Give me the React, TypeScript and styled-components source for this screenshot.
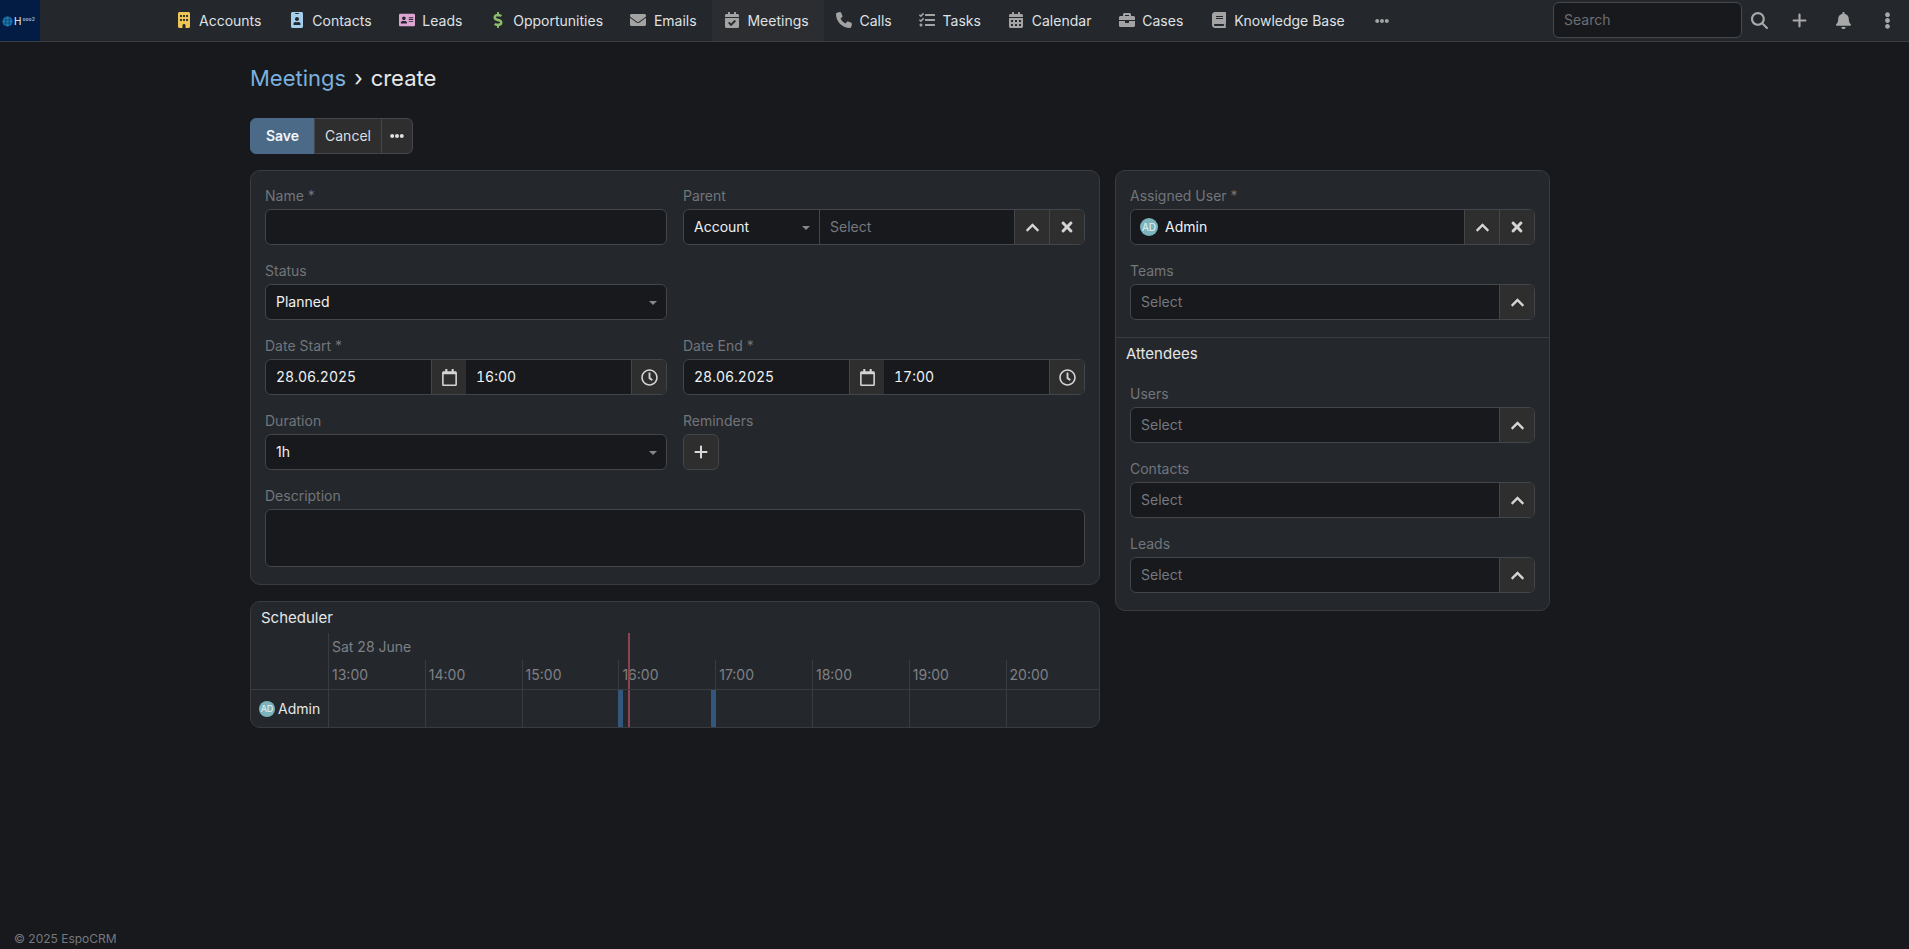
import React from "react";
import styled, { createGlobalStyle } from "styled-components";
import {
  FaIdBadge, FaAddressCard, FaDollarSign, FaEnvelope, FaCalendarCheck,
  FaTasks, FaCalendarAlt, FaBriefcase, FaBook, FaEllipsisH, FaEllipsisV,
  FaBell, FaRegCalendar, FaRegClock, FaTimes, FaChevronUp,
} from "react-icons/fa";
import { FaPhone, FaBuilding, FaPlus, FaMagnifyingGlass } from "react-icons/fa6";

const GlobalStyle = createGlobalStyle`
  html, body { margin: 0; padding: 0; height: 100%; background: #17191d; }
  body { font-family: Inter, "Liberation Sans", sans-serif; font-size: 14px; color: #e4e6e8; }
  * { box-sizing: border-box; }
`;

const Page = styled.div`
  height: 949px;
  display: flex;
  flex-direction: column;
  overflow: hidden;
`;

const Navbar = styled.header`
  height: 42px;
  flex: none;
  display: flex;
  background: #24272c;
  border-bottom: 1px solid #3a3d42;
`;

const LogoBox = styled.div`
  width: 40px;
  height: 41px;
  flex: none;
  background: #021c44;
  display: flex;
  align-items: center;
  padding: 1px 0 0 2px;
  gap: 1px;
`;

const LogoH = styled.span`
  color: #f2f4f8;
  font-size: 10px;
  line-height: 1;
`;

const LogoMark = styled.span`
  color: #9fb0c6;
  font-size: 5px;
  font-weight: 700;
  line-height: 1;
  margin-bottom: 3px;
`;

const NavList = styled.nav`
  display: flex;
  margin-left: 123.5px;
`;

const NavItem = styled.a<{ $active?: boolean }>`
  display: flex;
  align-items: center;
  height: 41px;
  padding: 0 15.35px 1px 11px;
  color: #dfe1e4;
  background: ${(p) => (p.$active ? "#2c2d30" : "transparent")};
  white-space: nowrap;
`;

const NavIcon = styled.span<{ $color?: string }>`
  width: 18px;
  margin-right: 6.5px;
  display: flex;
  justify-content: center;
  font-size: 16px;
  color: ${(p) => p.$color || "#a3a3a3"};
`;

const NavMore = styled.span`
  display: flex;
  align-items: center;
  margin-left: 15px;
  font-size: 14px;
  color: #a3a3a3;
`;

const NavRight = styled.div`
  margin-left: auto;
  display: flex;
  align-items: center;
`;

const SearchBox = styled.div`
  width: 189px;
  height: 36px;
  margin-bottom: 1px;
  display: flex;
  align-items: center;
  padding: 0 10px 1px;
  background: #17191d;
  border: 1px solid #46494e;
  border-radius: 6px;
  color: #6c6f74;
`;

const NavAction = styled.span<{ $w: number }>`
  width: ${(p) => p.$w}px;
  display: flex;
  justify-content: center;
  align-items: center;
  height: 38px;
  font-size: 17px;
  color: #a8a8a8;
`;

const Main = styled.main`
  flex: 1;
  padding-left: 250px;
  width: 1550px;
`;

const Title = styled.h1`
  margin: 21px 0 0;
  height: 30px;
  display: flex;
  align-items: center;
  font-size: 22px;
  line-height: 30px;
  font-weight: 400;
  gap: 8px;
`;

const Crumb = styled.span`
  color: #7cb0de;
`;

const Current = styled.span`
  color: #e6e8ea;
`;

const ButtonRow = styled.div`
  display: flex;
  margin-top: 25px;
  height: 36px;
`;

const ActionButton = styled.button<{ $primary?: boolean; $w: number }>`
  width: ${(p) => p.$w}px;
  height: 36px;
  font: ${(p) => (p.$primary ? 600 : 400)} 14px Inter, sans-serif;
  color: ${(p) => (p.$primary ? "#f4f6f8" : "#dcdee0")};
  background: ${(p) => (p.$primary ? "#4a6a88" : "#2e2e2e")};
  border: 1px solid ${(p) => (p.$primary ? "#4a6a88" : "#44464a")};
  margin-left: ${(p) => (p.$primary ? 0 : -1)}px;
  padding: 0 0 1px;
  display: flex;
  align-items: center;
  justify-content: center;
  &:first-child { border-radius: 6px 0 0 6px; margin-left: 0; }
  &:last-child { border-radius: 0 6px 6px 0; }
`;

const Columns = styled.div`
  display: grid;
  grid-template-columns: 850px 435px;
  column-gap: 15px;
  align-items: start;
  margin-top: 16px;
`;

const Column = styled.div`
  display: flex;
  flex-direction: column;
  gap: 16px;
`;

const Panel = styled.section`
  background: #24272c;
  border: 1px solid #383b40;
  border-radius: 10px;
`;

const PanelBody = styled.div`
  padding: 15px 14px 1px;
`;

const FormGrid = styled.div`
  display: grid;
  grid-template-columns: 402px 402px;
  column-gap: 16px;
`;

const Cell = styled.div<{ $wide?: boolean }>`
  grid-column: ${(p) => (p.$wide ? "1 / -1" : "auto")};
  margin-bottom: 16px;
`;

const Label = styled.div`
  height: 20px;
  line-height: 20px;
  margin-bottom: 3px;
  color: #72757a;
`;

const Group = styled.div`
  display: flex;
  height: 36px;
  background: #17191d;
  border: 1px solid #424549;
  border-radius: 6px;
  overflow: hidden;
`;

const TextArea = styled(Group)`
  height: 58px;
`;

const Value = styled.div<{ $w?: number; $placeholder?: boolean; $numeric?: boolean }>`
  flex: ${(p) => (p.$w ? `0 0 ${p.$w}px` : "1 1 0")};
  min-width: 0;
  display: flex;
  align-items: center;
  gap: 7px;
  padding: 0 10px 1px;
  color: ${(p) => (p.$placeholder ? "#75787d" : "#f0f2f4")};
  font-variant-numeric: ${(p) => (p.$numeric ? "tabular-nums" : "normal")};
  position: relative;
  & + & { border-left: 1px solid #424549; }
`;

const Caret = styled.i`
  position: absolute;
  right: 9px;
  top: 16px;
  border-left: 4px solid transparent;
  border-right: 4px solid transparent;
  border-top: 4px solid #85878a;
`;

const AddonButton = styled.span<{ $size?: number }>`
  flex: 0 0 35px;
  display: flex;
  align-items: center;
  justify-content: center;
  background: #2e2e2e;
  border-left: 1px solid #424549;
  color: #d4d4d4;
  font-size: ${(p) => p.$size || 15}px;
`;

const SquareButton = styled.span`
  width: 36px;
  height: 36px;
  display: flex;
  align-items: center;
  justify-content: center;
  background: #2e2e2e;
  border: 1px solid #424549;
  border-radius: 6px;
  color: #d8d8d8;
  font-size: 16px;
`;

const Avatar = styled.span<{ $size: number; $font: number; $inset?: boolean }>`
  width: ${(p) => p.$size}px;
  height: ${(p) => p.$size}px;
  flex: none;
  margin-left: ${(p) => (p.$inset ? -1 : 0)}px;
  border-radius: 50%;
  background: #7bb4bc;
  color: #e6f3f5;
  font-size: ${(p) => p.$font}px;
  display: flex;
  align-items: center;
  justify-content: center;
`;

const Divider = styled.hr`
  margin: 0;
  border: 0;
  border-top: 1px solid #383b40;
`;

const SectionTitle = styled.div`
  height: 31px;
  padding: 6px 0 0 10px;
  font-size: 15px;
  line-height: 20px;
  color: #e4e6e8;
`;

const Chart = styled.div`
  display: grid;
  grid-template-columns: 77px 1fr;
  grid-template-rows: 57px 37px;
  overflow: hidden;
  border-radius: 0 0 10px 10px;
`;

const ChartCorner = styled.div`
  border-bottom: 1px solid #383b40;
`;

const TimeHead = styled.div`
  display: flex;
  flex-direction: column;
  border-bottom: 1px solid #383b40;
  position: relative;
`;

const DateLabel = styled.div`
  height: 28px;
  padding: 4px 0 0 3px;
  line-height: 20px;
  color: #7e8186;
  border-left: 1px solid #383b40;
`;

const Hours = styled.div`
  display: grid;
  grid-template-columns: repeat(8, 96.8px);
  flex: 1;
`;

const HourCell = styled.div`
  padding-left: 3px;
  line-height: 29px;
  color: #7e8186;
  border-left: 1px solid #383b40;
`;

const RowLabel = styled.div`
  display: flex;
  align-items: center;
  padding-left: 8px;
  gap: 3px;
  color: #e4e6e8;
`;

const Track = styled.div`
  display: grid;
  grid-template-columns: repeat(8, 96.8px);
  position: relative;
`;

const TrackCell = styled.div`
  border-left: 1px solid #383b40;
`;

const EventRange = styled.div`
  position: absolute;
  top: 0;
  bottom: 0;
  left: 290px;
  width: 98px;
  border-left: 5px solid #33567c;
  border-right: 5px solid #33567c;
`;

const NowLine = styled.div`
  position: absolute;
  top: 0;
  bottom: 0;
  left: 300px;
  width: 2px;
  background: #8c4250;
`;

const Footer = styled.footer`
  flex: none;
  height: 20px;
  padding-left: 14px;
  font-size: 12px;
  line-height: 20px;
  color: #75787d;
`;

const navItems = [
  { label: "Accounts", icon: <FaBuilding />, color: "#edc555" },
  { label: "Contacts", icon: <FaIdBadge />, color: "#a5cdec" },
  { label: "Leads", icon: <FaAddressCard />, color: "#dda6d2" },
  { label: "Opportunities", icon: <FaDollarSign />, color: "#8fbc6c" },
  { label: "Emails", icon: <FaEnvelope /> },
  { label: "Meetings", icon: <FaCalendarCheck />, active: true },
  { label: "Calls", icon: <FaPhone /> },
  { label: "Tasks", icon: <FaTasks /> },
  { label: "Calendar", icon: <FaCalendarAlt /> },
  { label: "Cases", icon: <FaBriefcase /> },
  { label: "Knowledge Base", icon: <FaBook /> },
];

const hours = ["13:00", "14:00", "15:00", "16:00", "17:00", "18:00", "19:00", "20:00"];

const Globe = () => (
  <svg width="11" height="11" viewBox="0 0 11 11">
    <circle cx="5.5" cy="5.5" r="5" fill="#1f7fb8" />
    <path d="M0.5 4h10M0.5 7h10M3.8 0.5v10M7.2 0.5v10" stroke="#0a3f6c" strokeWidth="0.8" />
  </svg>
);

const Chevron = () => (
  <AddonButton>
    <FaChevronUp />
  </AddonButton>
);

const Clear = () => (
  <AddonButton $size={16}>
    <FaTimes />
  </AddonButton>
);

const LinkField = ({ label }: { label: string }) => (
  <Cell>
    <Label>{label}</Label>
    <Group>
      <Value $placeholder>Select</Value>
      <Chevron />
    </Group>
  </Cell>
);

const DateField = ({ label, time }: { label: string; time: string }) => (
  <Cell>
    <Label>{label}</Label>
    <Group>
      <Value $numeric>28.06.2025</Value>
      <AddonButton $size={17}><FaRegCalendar /></AddonButton>
      <Value $numeric>{time}</Value>
      <AddonButton $size={17}><FaRegClock /></AddonButton>
    </Group>
  </Cell>
);

const SelectField = ({ label, value }: { label: string; value: string }) => (
  <Cell>
    <Label>{label}</Label>
    <Group>
      <Value>
        {value}
        <Caret />
      </Value>
    </Group>
  </Cell>
);

export default function App() {
  return (
    <Page>
      <GlobalStyle />
      <Navbar>
        <LogoBox>
          <Globe />
          <LogoH>H</LogoH>
          <LogoMark>ooo2</LogoMark>
        </LogoBox>
        <NavList>
          {navItems.map((item) => (
            <NavItem key={item.label} $active={item.active}>
              <NavIcon $color={item.color}>{item.icon}</NavIcon>
              {item.label}
            </NavItem>
          ))}
          <NavMore><FaEllipsisH /></NavMore>
        </NavList>
        <NavRight>
          <SearchBox>Search</SearchBox>
          <NavAction $w={35}><FaMagnifyingGlass /></NavAction>
          <NavAction $w={44}><FaPlus /></NavAction>
          <NavAction $w={44}><FaBell /></NavAction>
          <NavAction $w={44}><FaEllipsisV /></NavAction>
        </NavRight>
      </Navbar>
      <Main>
        <Title>
          <Crumb>Meetings</Crumb>
          <Current>›</Current>
          <Current>create</Current>
        </Title>
        <ButtonRow>
          <ActionButton $primary $w={65}>Save</ActionButton>
          <ActionButton $w={68}>Cancel</ActionButton>
          <ActionButton $w={32}><FaEllipsisH /></ActionButton>
        </ButtonRow>
        <Columns>
          <Column>
            <Panel>
              <PanelBody>
                <FormGrid>
                  <Cell>
                    <Label>Name *</Label>
                    <Group />
                  </Cell>
                  <Cell>
                    <Label>Parent</Label>
                    <Group>
                      <Value $w={135}>
                        Account
                        <Caret />
                      </Value>
                      <Value $placeholder>Select</Value>
                      <Chevron />
                      <Clear />
                    </Group>
                  </Cell>
                  <SelectField label="Status" value="Planned" />
                  <Cell />
                  <DateField label="Date Start *" time="16:00" />
                  <DateField label="Date End *" time="17:00" />
                  <SelectField label="Duration" value="1h" />
                  <Cell>
                    <Label>Reminders</Label>
                    <SquareButton><FaPlus /></SquareButton>
                  </Cell>
                  <Cell $wide>
                    <Label>Description</Label>
                    <TextArea />
                  </Cell>
                </FormGrid>
              </PanelBody>
            </Panel>
            <Panel>
              <SectionTitle>Scheduler</SectionTitle>
              <Chart>
                <ChartCorner />
                <TimeHead>
                  <DateLabel>Sat 28 June</DateLabel>
                  <Hours>
                    {hours.map((h) => <HourCell key={h}>{h}</HourCell>)}
                  </Hours>
                  <NowLine />
                </TimeHead>
                <RowLabel>
                  <Avatar $size={16} $font={9}>AD</Avatar>
                  Admin
                </RowLabel>
                <Track>
                  {hours.map((h) => <TrackCell key={h} />)}
                  <EventRange />
                  <NowLine />
                </Track>
              </Chart>
            </Panel>
          </Column>
          <Panel>
            <PanelBody>
              <Cell>
                <Label>Assigned User *</Label>
                <Group>
                  <Value>
                    <Avatar $size={18} $font={10} $inset>AD</Avatar>
                    Admin
                  </Value>
                  <Chevron />
                  <Clear />
                </Group>
              </Cell>
              <LinkField label="Teams" />
            </PanelBody>
            <Divider />
            <SectionTitle>Attendees</SectionTitle>
            <PanelBody>
              <LinkField label="Users" />
              <LinkField label="Contacts" />
              <LinkField label="Leads" />
            </PanelBody>
          </Panel>
        </Columns>
      </Main>
      <Footer>© 2025 EspoCRM</Footer>
    </Page>
  );
}
